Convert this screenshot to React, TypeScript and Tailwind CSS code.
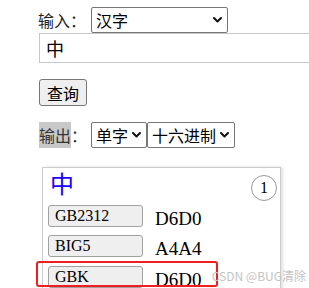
import React from "react";

const cjk = { fontFamily: '"Noto Sans CJK SC", "Noto Sans", sans-serif' };
const serif = { fontFamily: '"Liberation Serif", "Noto Sans CJK SC", serif' };

function Chevron() {
  return (
    <svg width="9" height="6" viewBox="0 0 9 6" className="shrink-0">
      <polyline points="1,1 4.5,4.5 8,1" fill="none" stroke="#111" strokeWidth="2" strokeLinecap="round" strokeLinejoin="round" />
    </svg>
  );
}

function FakeSelect({ label, width }: { label: string; width: string }) {
  return (
    <div
      className={`flex h-[26px] items-center justify-between rounded-[2px] border border-[#767676] bg-white pl-[4px] pr-[5px] text-[16px] leading-none text-black ${width}`}
      style={cjk}
    >
      <span>{label}</span>
      <Chevron />
    </div>
  );
}

function CodeRow({ name, code, mt }: { name: string; code: string; mt: string }) {
  return (
    <div className={`flex items-start ${mt}`}>
      <div
        className="flex h-[22px] w-[95px] items-center rounded-[3px] border border-[#a0a0a0] bg-[#efefef] pl-[6px] text-[16px] text-black"
        style={serif}
      >
        {name}
      </div>
      <div className="ml-[12px] mt-[4px] text-[19px] leading-none text-black" style={serif}>
        {code}
      </div>
    </div>
  );
}

export default function App() {
  return (
    <div className="relative h-[288px] w-[309px] overflow-hidden bg-white pl-[38px]">
      {/* 输入 row */}
      <div className="flex items-center pt-[7px]" style={cjk}>
        <span className="text-[16px] leading-none text-[#222]">输入：</span>
        <div className="ml-[5px]">
          <FakeSelect label="汉字" width="w-[137px]" />
        </div>
      </div>

      {/* text input */}
      <div
        className="ml-[1px] flex h-[30px] w-[290px] items-center border border-[#c8c8c8] pl-[6px] text-[18px] leading-none text-black"
        style={cjk}
      >
        中
      </div>

      {/* query button */}
      <button
        className="ml-[1px] mt-[16px] flex h-[27px] w-[48px] items-center justify-center rounded-[3px] border border-[#767676] bg-[#efefef] text-[16px] leading-none text-black"
        style={cjk}
      >
        查询
      </button>

      {/* 输出 row */}
      <div className="ml-[1px] mt-[16px] flex h-[26px] items-center" style={cjk}>
        <span className="flex h-[26px] items-center bg-[#c8c8c8] text-[16px] leading-none text-[#333]">输出</span>
        <span className="text-[16px] leading-none text-[#333]">：</span>
        <div className="ml-[4px] flex">
          <FakeSelect label="单字" width="w-[56px]" />
          <FakeSelect label="十六进制" width="w-[88px]" />
        </div>
      </div>

      {/* result card */}
      <div className="ml-[4px] mt-[19px] w-[239px] border border-[#cccccc] pb-[10px] pl-[5px] pr-[3px] pt-[3px] shadow-[2px_0_3px_rgba(0,0,0,0.12)]">
        <div className="flex h-[24px] items-start justify-between">
          <span className="ml-[2px] text-[24px] leading-none text-[#1a00ff]" style={cjk}>
            中
          </span>
          <div
            className="mt-[4px] flex h-[26px] w-[26px] shrink-0 items-center justify-center rounded-full border border-[#999] text-[16px] leading-none text-black"
            style={serif}
          >
            1
          </div>
        </div>
        <CodeRow name="GB2312" code="D6D0" mt="mt-[10px]" />
        <CodeRow name="BIG5" code="A4A4" mt="mt-[7px]" />
        <CodeRow name="GBK" code="D6D0" mt="mt-[8px]" />
      </div>

      {/* red annotation */}
      <div className="absolute left-[36px] top-[261px] h-[26px] w-[182px] rounded-[3px] border-2 border-[#f01e1e]" />

      {/* watermark */}
      <div
        className="absolute right-[3px] top-[270px] text-[12px] leading-none text-[#c4c4c4]"
        style={cjk}
      >
        CSDN @BUG清除
      </div>
    </div>
  );
}
